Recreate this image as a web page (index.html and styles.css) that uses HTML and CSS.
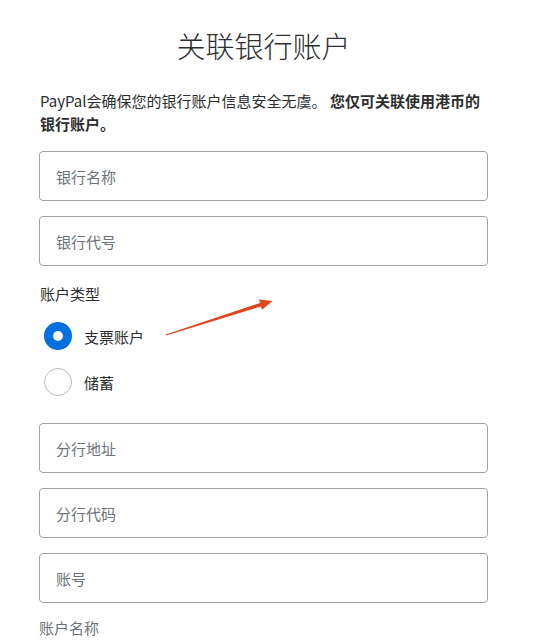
FILE: index.html
```html
<!DOCTYPE html>
<html lang="zh-CN">
<head>
<meta charset="utf-8">
<title>关联银行账户</title>
<link rel="stylesheet" href="styles.css">
</head>
<body>
<main class="page">
  <h1 class="title">关联银行账户</h1>
  <p class="intro">PayPal会确保您的银行账户信息安全无虞。 <strong>您仅可关联使用港币的银行账户。</strong></p>
  <div class="fields">
    <div class="field"><span class="placeholder">银行名称</span></div>
    <div class="field"><span class="placeholder">银行代号</span></div>
  </div>
  <div class="acct-type">
    <div class="label">账户类型</div>
    <div class="radios">
      <div class="radio-row"><span class="radio checked"></span><span class="radio-label">支票账户</span></div>
      <div class="radio-row"><span class="radio"></span><span class="radio-label">储蓄</span></div>
    </div>
  </div>
  <div class="fields fields-lower">
    <div class="field"><span class="placeholder">分行地址</span></div>
    <div class="field"><span class="placeholder">分行代码</span></div>
    <div class="field"><span class="placeholder">账号</span></div>
  </div>
  <div class="sub-label">账户名称</div>
  <svg class="arrow" width="120" height="50" viewBox="0 0 120 50" aria-hidden="true">
    <polygon points="6.2,45.6 100.8,16.4 102,19.8 112.5,11 99,9.6 100,13 5.8,44.4" fill="#e0461e"/>
  </svg>
</main>
</body>
</html>
```
FILE: styles.css
```css
html, body {
  margin: 0;
  padding: 0;
  background: #ffffff;
}
body {
  font-family: "Noto Sans CJK SC", "Noto Sans", sans-serif;
  color: #2c2e2f;
}
.page {
  position: relative;
  width: 449px;
  padding: 26px 0 0 39px;
  display: flex;
  flex-direction: column;
}
.title {
  margin: 0;
  font-size: 29px;
  font-weight: 200;
  line-height: 38px;
  text-align: center;
  color: #2c2e2f;
}
.intro {
  margin: 25px 0 0 1px;
  font-size: 15px;
  line-height: 23px;
}
.intro strong {
  font-weight: 700;
}
.fields {
  display: flex;
  flex-direction: column;
  gap: 15px;
  margin-top: 16px;
}
.fields-lower {
  margin-top: 27px;
}
.field {
  box-sizing: border-box;
  height: 50px;
  border: 1px solid #9da3a6;
  border-radius: 4px;
  display: flex;
  align-items: center;
  padding: 0 16px;
}
.placeholder {
  font-size: 15px;
  color: #6c7378;
}
.acct-type {
  margin-top: 17px;
}
.label {
  font-size: 15px;
  line-height: 22px;
  margin-left: 1px;
}
.radios {
  display: flex;
  flex-direction: column;
  gap: 18px;
  margin-top: 17px;
}
.radio-row {
  display: flex;
  align-items: center;
  gap: 12px;
  padding-left: 5px;
}
.radio {
  box-sizing: border-box;
  width: 28px;
  height: 28px;
  border-radius: 50%;
  border: 1px solid #b7bcbf;
  background: #fff;
}
.radio.checked {
  border: 9px solid #0070e0;
}
.radio-label {
  font-size: 15px;
  color: #2c2e2f;
}
.sub-label {
  margin-top: 14px;
  font-size: 15px;
  line-height: 22px;
  color: #6c7378;
}
.arrow {
  position: absolute;
  left: 160px;
  top: 290px;
}
```
